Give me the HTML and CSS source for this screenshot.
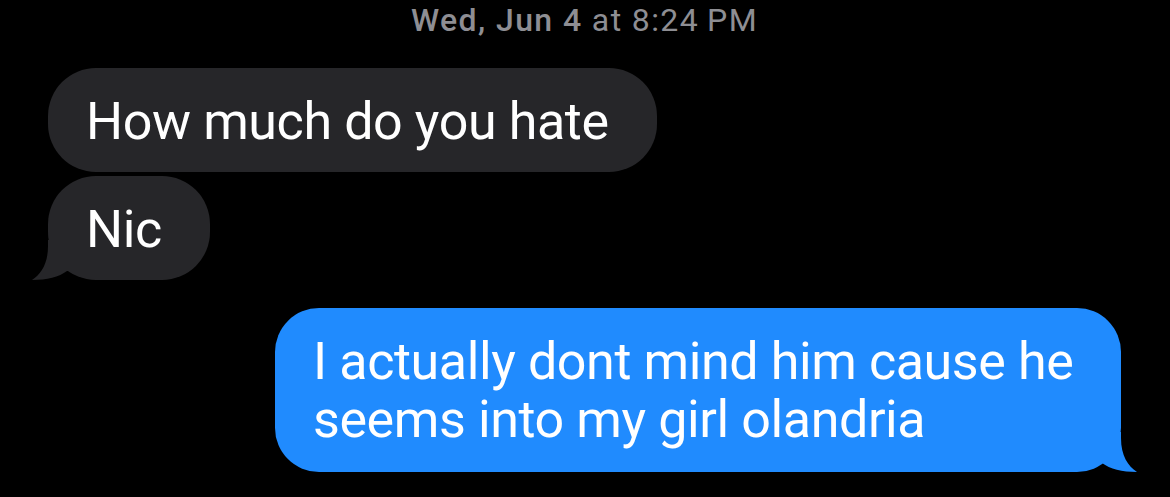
FILE: index.html
```html
<!DOCTYPE html>
<html lang="en">
<head>
    <meta charset="UTF-8">
    <meta name="viewport" content="width=device-width, initial-scale=1.0">
    <title>Messages</title>
    <link rel="stylesheet" href="styles.css">
</head>
<body>
    <div class="thread">
        <div class="stamp"><span class="stamp-day">Wed, Jun 4</span> at 8:24&#8201;PM</div>

        <div class="bubble received">How much do you hate</div>
        <div class="bubble received last">Nic
            <svg class="tail" viewBox="0 0 40 40" width="40" height="40"><path d="M4 31 C12 37 24 40 39 40 C30 34 23 24 23 6 L23 0 L0 0 L0 31 Z"/></svg>
        </div>

        <div class="bubble sent last">I actually dont mind him cause he seems into my girl olandria
            <svg class="tail" viewBox="0 0 40 40" width="40" height="40"><path d="M4 31 C12 37 24 40 39 40 C30 34 23 24 23 6 L23 0 L0 0 L0 31 Z"/></svg>
        </div>
    </div>
</body>
</html>
```

FILE: styles.css
```css
body { background-color: #000; color: #fff; font-family: 'Roboto', 'Noto Sans', sans-serif; margin: 0; padding: 0; }
.thread { display: flex; flex-direction: column; padding: 0 49px 0 48px; }
.stamp { text-align: center; color: #8e8e93; font-size: 32px; letter-spacing: 1.4px; line-height: 40px; margin-bottom: 28px; }
.stamp-day { font-weight: 500; }
.bubble { position: relative; font-size: 52px; letter-spacing: -0.4px; line-height: 58px; padding: 25px 48px 21px 38px; border-radius: 48px; max-width: 770px; }
.received { align-self: flex-start; background-color: #262629; margin-bottom: 4px; }
.sent { align-self: flex-end; background-color: #208bfe; margin-top: 24px; padding: 25px 38px 23px; border-radius: 44px; }
.tail { position: absolute; bottom: 0; }
.sent .tail { right: -17px; fill: #208bfe; }
.received .tail { left: -17px; fill: #262629; transform: scaleX(-1); }
```
